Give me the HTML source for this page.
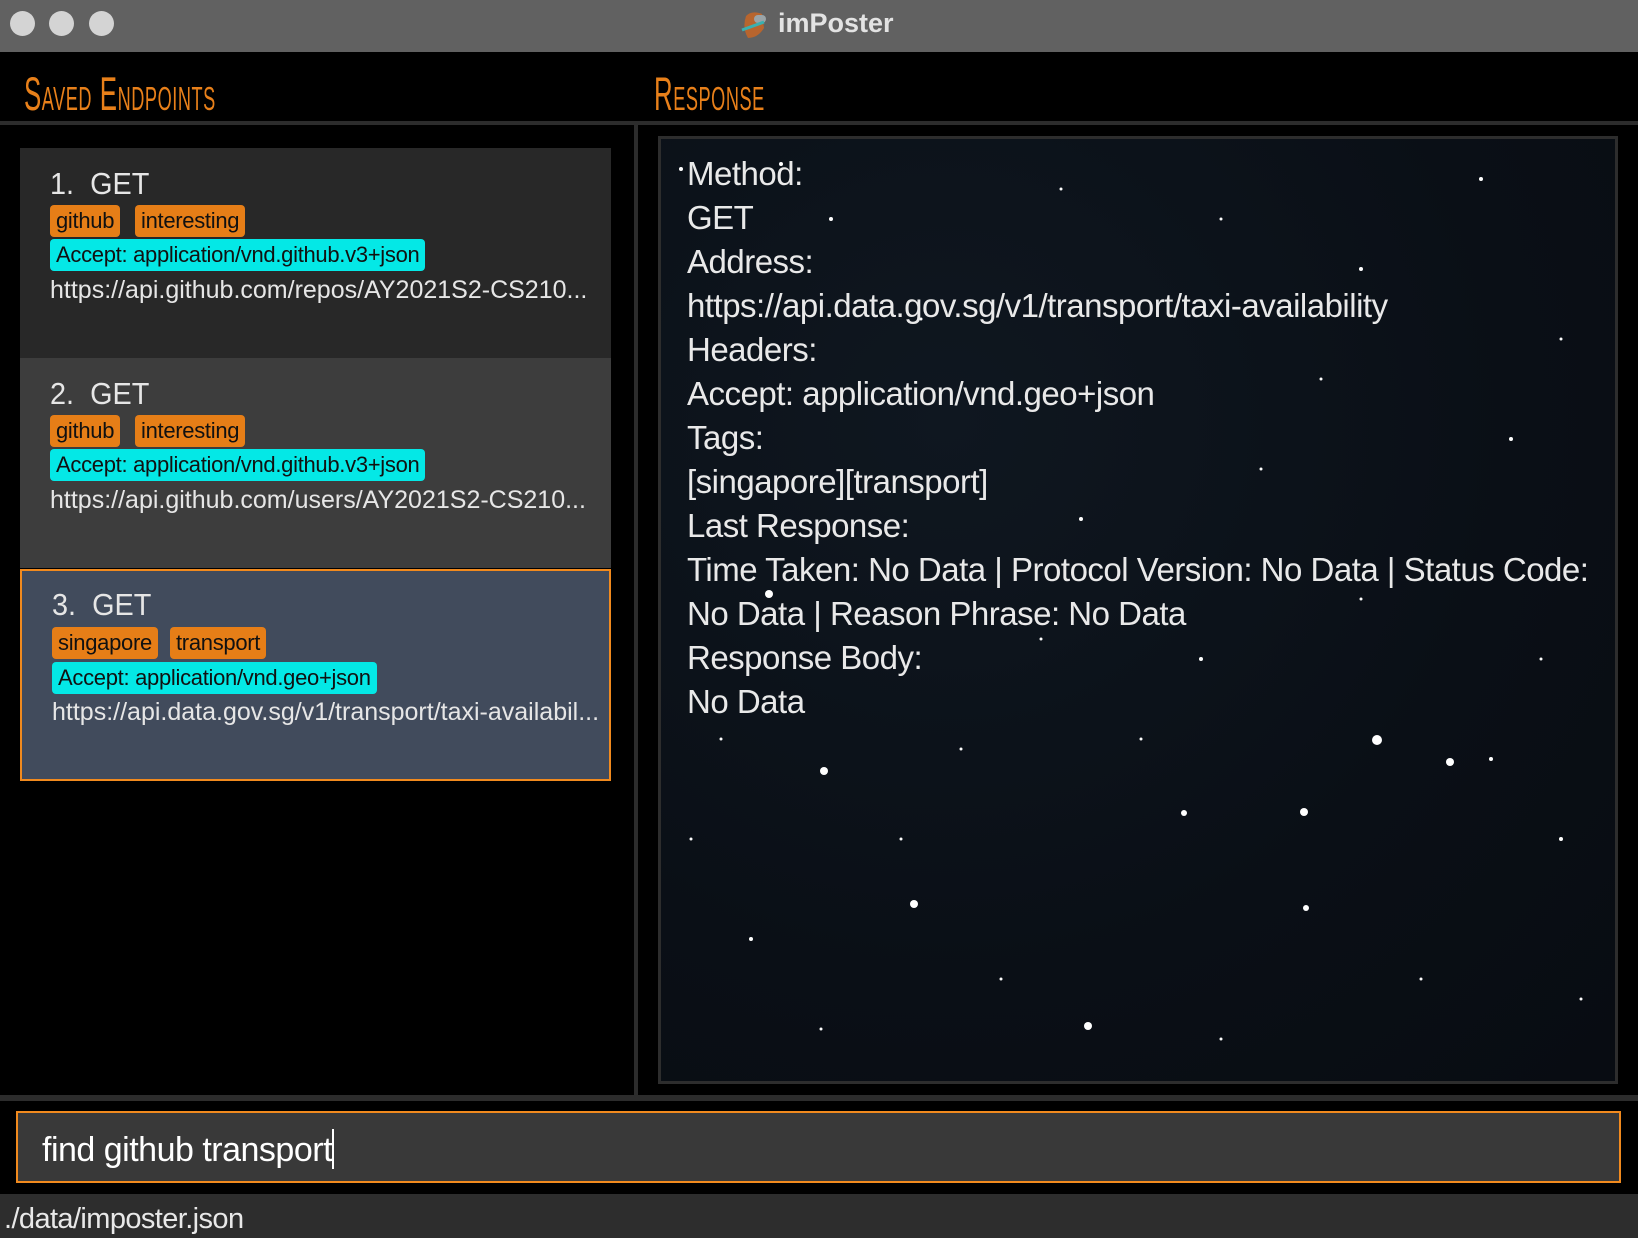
<!DOCTYPE html>
<html><head><meta charset="utf-8">
<style>
*{margin:0;padding:0;box-sizing:border-box}
html,body{width:1638px;height:1238px;overflow:hidden;background:#000;font-family:"Liberation Sans",sans-serif}
.title{position:absolute;left:0;top:0;width:1638px;height:52px;background:#616161}
.dot{position:absolute;top:11px;width:25px;height:25px;border-radius:50%;background:#d4d4d4}
.ttl{position:absolute;left:778px;top:8px;font-size:27px;font-weight:bold;color:#e3e3e3}
.hdr{position:absolute;top:66px;color:#e8801a;font-family:"Liberation Sans Narrow","Liberation Sans",sans-serif;font-variant:small-caps;font-size:47px;transform:scaleX(0.55);transform-origin:left top;letter-spacing:1px}
.hline{position:absolute;left:0;top:121px;width:1638px;height:4px;background:#2c2c2c}
.vline{position:absolute;left:634px;top:125px;width:4px;height:970px;background:#2c2c2c}
.bline{position:absolute;left:0;top:1095px;width:1638px;height:6px;background:#2c2c2c}
.card{position:absolute;left:20px;width:591px;height:210px;color:#e6e6e6}
.card .t{position:absolute;left:30px;top:18px;font-size:31px;transform:scaleX(0.93);transform-origin:left top}
.tag{position:absolute;height:32px;border-radius:4px;background:#e67e17;color:#111;font-size:22px;line-height:32px;padding:0 6px;letter-spacing:-0.3px}
.hd{background:#04e8e6}
.url{position:absolute;left:30px;font-size:25px;letter-spacing:0;white-space:nowrap}
.resp{position:absolute;left:658px;top:136px;width:960px;height:948px;border:3px solid #2d2d2d;background:radial-gradient(ellipse at 30% 30%,#0f1720,#0a0f16 60%,#080c12)}
.rt{position:absolute;left:26px;top:13px;color:#e9e9e9;font-size:33px;line-height:44px;white-space:nowrap;letter-spacing:-0.5px}
.cmd{position:absolute;left:16px;top:1111px;width:1605px;height:72px;border:2px solid #f18a1e;background:#393939}
.cmd span{position:absolute;left:24px;top:16px;font-size:34px;color:#fff;letter-spacing:-0.5px}
.status{position:absolute;left:0;top:1194px;width:1638px;height:44px;background:#2d2d2d}
.status span{position:absolute;left:4px;top:9px;font-size:29px;color:#e8e8e8;letter-spacing:-0.6px}
</style></head><body>
<div class="title">
<div class="dot" style="left:10px"></div><div class="dot" style="left:49px"></div><div class="dot" style="left:89px"></div>
<svg style="position:absolute;left:738px;top:8px" width="34" height="34" viewBox="0 0 34 34"><path d="M8 8 Q14 2 24 6 L26 20 Q20 30 10 30 Q4 20 8 8Z" fill="#b8652e"/><rect x="16" y="7" width="12" height="8" rx="4" fill="#9aa4a8"/><path d="M4 22 L26 14" stroke="#3ab0b0" stroke-width="3"/></svg>
<div class="ttl">imPoster</div>
</div>
<div class="hdr" style="left:24px">Saved Endpoints</div>
<div class="hdr" style="left:654px">Response</div>
<div class="hline"></div><div class="vline"></div><div class="bline"></div>

<div class="card" style="top:148px;background:#282828">
<div class="t">1.&nbsp; GET</div>
<div class="tag" style="left:30px;top:57px">github</div>
<div class="tag" style="left:115px;top:57px">interesting</div>
<div class="tag hd" style="left:30px;top:91px">Accept: application/vnd.github.v3+json</div>
<div class="url" style="top:128px">https://api.github.com/repos/AY2021S2-CS210...</div>
</div>
<div class="card" style="top:358px;background:#3d3d3d">
<div class="t">2.&nbsp; GET</div>
<div class="tag" style="left:30px;top:57px">github</div>
<div class="tag" style="left:115px;top:57px">interesting</div>
<div class="tag hd" style="left:30px;top:91px">Accept: application/vnd.github.v3+json</div>
<div class="url" style="top:128px">https://api.github.com/users/AY2021S2-CS210...</div>
</div>
<div class="card" style="top:569px;height:212px;background:#414b5c;border:2px solid #f18a1e">
<div class="t" style="left:30px;top:16px">3.&nbsp; GET</div>
<div class="tag" style="left:30px;top:56px">singapore</div>
<div class="tag" style="left:148px;top:56px">transport</div>
<div class="tag hd" style="left:30px;top:91px">Accept: application/vnd.geo+json</div>
<div class="url" style="top:127px">https://api.data.gov.sg/v1/transport/taxi-availabil...</div>
</div>

<div class="resp">
<svg width="954" height="942" style="position:absolute;left:0;top:0" fill="#fff">
<circle cx="163" cy="632" r="4"/><circle cx="716" cy="601" r="5"/><circle cx="789" cy="623" r="4"/><circle cx="643" cy="673" r="4"/><circle cx="253" cy="765" r="4"/><circle cx="427" cy="887" r="4"/><circle cx="523" cy="674" r="3"/><circle cx="645" cy="769" r="3"/><circle cx="108" cy="455" r="4"/>
<circle cx="20" cy="30" r="2"/><circle cx="120" cy="25" r="2"/><circle cx="170" cy="80" r="2"/><circle cx="400" cy="50" r="1.5"/><circle cx="560" cy="80" r="1.5"/><circle cx="700" cy="130" r="2"/><circle cx="820" cy="40" r="2"/><circle cx="900" cy="200" r="1.5"/><circle cx="850" cy="300" r="2"/><circle cx="600" cy="330" r="1.5"/><circle cx="420" cy="380" r="2"/><circle cx="380" cy="500" r="1.5"/><circle cx="540" cy="520" r="2"/><circle cx="880" cy="520" r="1.5"/><circle cx="60" cy="600" r="1.5"/><circle cx="240" cy="700" r="1.5"/><circle cx="90" cy="800" r="2"/><circle cx="340" cy="840" r="1.5"/><circle cx="760" cy="840" r="1.5"/><circle cx="900" cy="700" r="2"/><circle cx="560" cy="900" r="1.5"/><circle cx="160" cy="890" r="1.5"/><circle cx="920" cy="860" r="1.5"/><circle cx="480" cy="600" r="1.5"/><circle cx="300" cy="610" r="1.5"/><circle cx="700" cy="460" r="1.5"/><circle cx="30" cy="700" r="1.5"/><circle cx="830" cy="620" r="2"/><circle cx="260" cy="180" r="1.5"/><circle cx="660" cy="240" r="1.5"/>
</svg>
<div class="rt">Method:<br>GET<br>Address:<br>https://api.data.gov.sg/v1/transport/taxi-availability<br>Headers:<br>Accept: application/vnd.geo+json<br>Tags:<br>[singapore][transport]<br>Last Response:<br>Time Taken: No Data | Protocol Version: No Data | Status Code:<br>No Data | Reason Phrase: No Data<br>Response Body:<br>No Data</div>
</div>

<div class="cmd"><span>find github transport<span style="position:static;display:inline-block;width:2px;height:40px;background:#fff;vertical-align:-8px"></span></span></div>
<div class="status"><span>./data/imposter.json</span></div>
</body></html>
